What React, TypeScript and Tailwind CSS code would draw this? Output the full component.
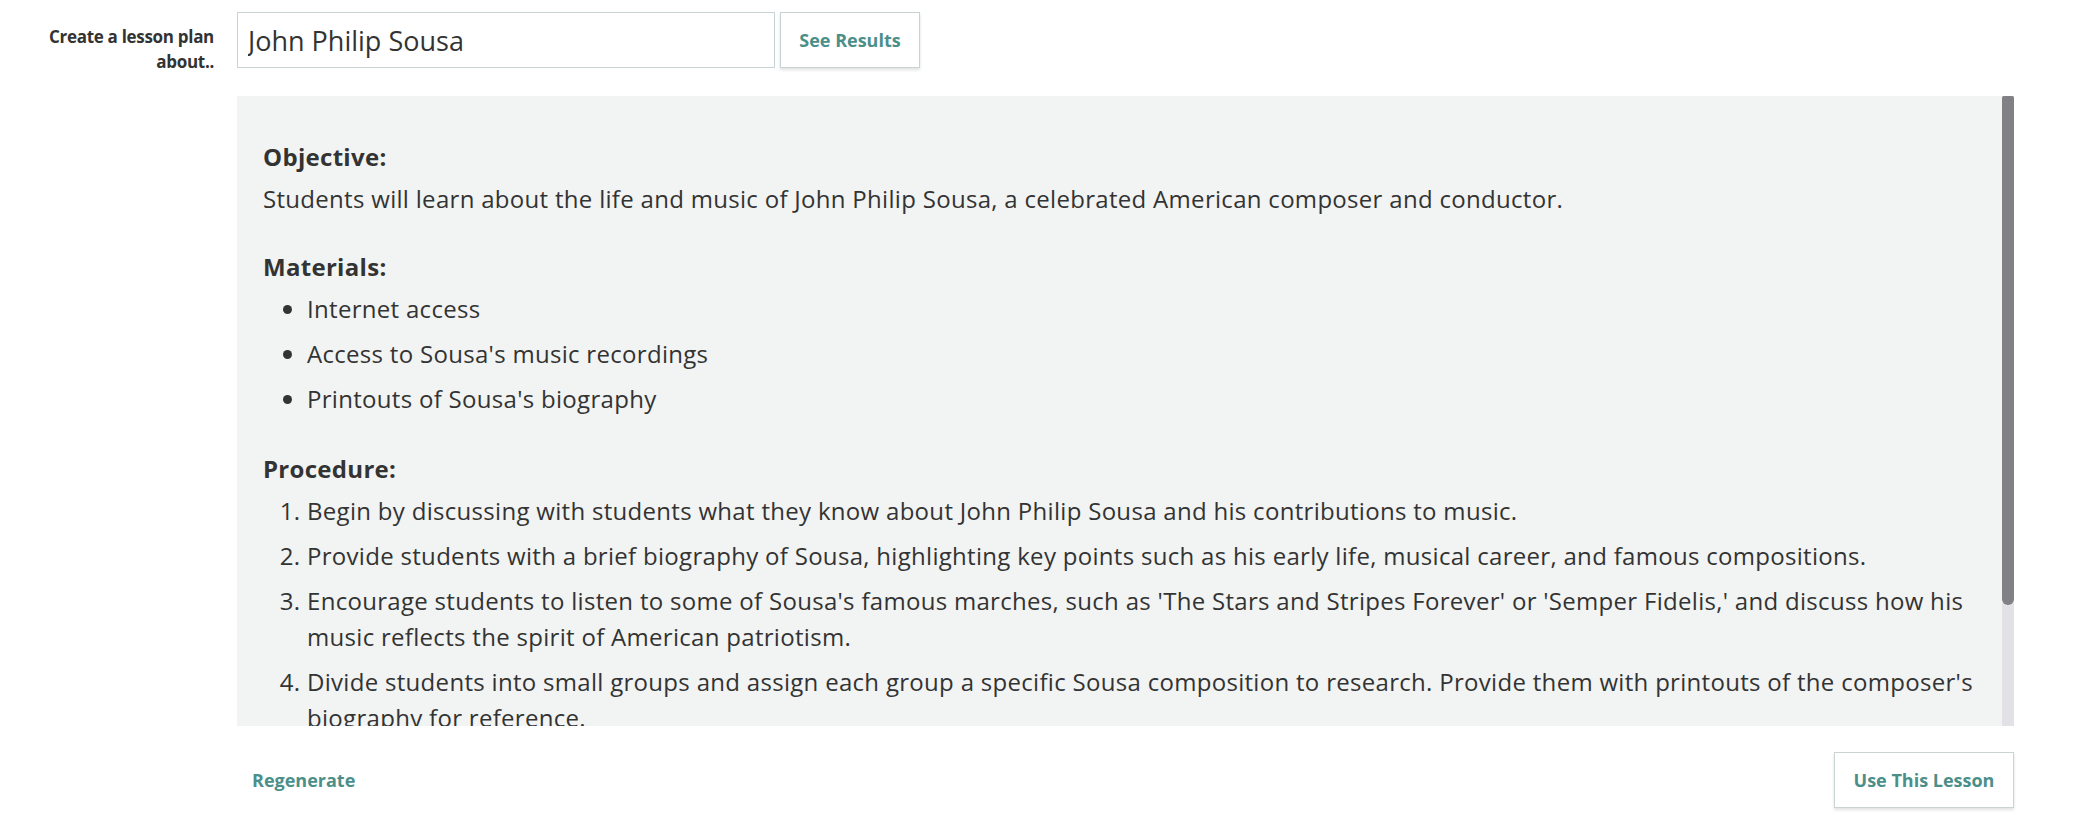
import React, { useState } from 'react';

const MATERIALS = [
  'Internet access',
  "Access to Sousa's music recordings",
  "Printouts of Sousa's biography",
];

const STEPS = [
  'Begin by discussing with students what they know about John Philip Sousa and his contributions to music.',
  'Provide students with a brief biography of Sousa, highlighting key points such as his early life, musical career, and famous compositions.',
  "Encourage students to listen to some of Sousa's famous marches, such as 'The Stars and Stripes Forever' or 'Semper Fidelis,' and discuss how his music reflects the spirit of American patriotism.",
  "Divide students into small groups and assign each group a specific Sousa composition to research. Provide them with printouts of the composer's biography for reference.",
  'Have each group present their findings to the class, including a short listening excerpt of the composition they researched.',
  'Conclude the lesson with a class discussion about the lasting impact of Sousa on American music and culture.',
];

export default function App() {
  const [topic, setTopic] = useState('John Philip Sousa');

  return (
    <div className="min-h-screen bg-white text-[#333] font-['Open_Sans',sans-serif]">
      {/* Prompt row */}
      <div className="flex items-start pt-[12px]">
        <label className="w-[214px] pl-[20px] pt-[12px] text-right text-[17px] leading-[25px] font-bold tracking-[-0.3px] text-[#333]">
          Create a lesson plan about..
        </label>
        <input
          value={topic}
          onChange={(e) => setTopic(e.target.value)}
          className="ml-[23px] h-[56px] w-[538px] border border-[#c8d3d3] bg-white px-[10px] text-[27px] text-[#333] focus:outline-none"
        />
        <button className="ml-[5px] h-[56px] w-[140px] border border-[#c8d3d3] bg-white text-[18px] font-bold text-[#4b8f8b] shadow-[0_2px_3px_rgba(0,0,0,0.12)]">
          See Results
        </button>
      </div>

      {/* Lesson output */}
      <div className="ml-[237px] mt-[22px] mr-[70px] flex h-[630px] bg-[#f2f4f3]">
        <div className="flex-1 overflow-hidden pl-[26px] pr-[14px] pt-[43px] text-[24px] leading-[36px] tracking-[0.3px]">
          <h3 className="mb-[6px] font-bold">Objective:</h3>
          <p className="mb-[32px]">
            Students will learn about the life and music of John Philip Sousa, a celebrated American composer and conductor.
          </p>

          <h3 className="mb-[6px] font-bold">Materials:</h3>
          <ul className="mb-[34px] list-disc pl-[44px]">
            {MATERIALS.map((m, i) => (
              <li key={m} className={i > 0 ? 'mt-[9px]' : ''}>{m}</li>
            ))}
          </ul>

          <h3 className="mb-[6px] font-bold">Procedure:</h3>
          <ol className="list-decimal pl-[44px]">
            {STEPS.map((s, i) => (
              <li key={i} className={i > 0 ? 'mt-[9px]' : ''}>{s}</li>
            ))}
          </ol>
        </div>
        {/* scrollbar */}
        <div className="flex w-[12px] flex-col bg-[#e2e2e6]">
          <div className="h-[509px] rounded-b-[6px] rounded-t-[2px] bg-[#808085]" />
        </div>
      </div>

      {/* Footer actions */}
      <div className="ml-[237px] mr-[70px] mt-[26px] flex items-center justify-between">
        <button className="pl-[15px] text-[18px] font-bold text-[#4b8f8b]">Regenerate</button>
        <button className="h-[56px] w-[180px] border border-[#c8d3d3] bg-white text-[18px] font-bold text-[#4b8f8b] shadow-[0_2px_3px_rgba(0,0,0,0.12)]">
          Use This Lesson
        </button>
      </div>
    </div>
  );
}
